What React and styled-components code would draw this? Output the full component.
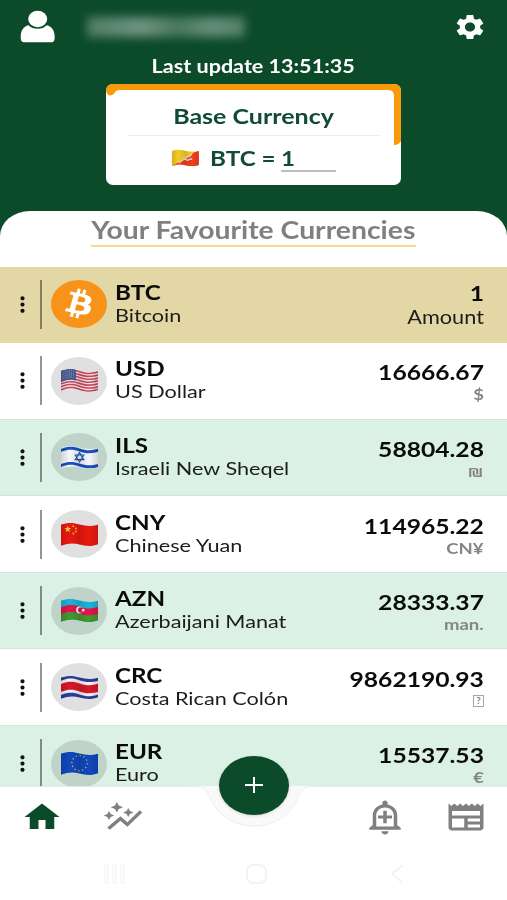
import React from 'react';
import styled, { createGlobalStyle } from 'styled-components';
import {
	MdAutoGraph,
	MdHome,
	MdMoreVert,
	MdNewspaper,
	MdOutlineAddAlert,
	MdSettings
} from 'react-icons/md';

const GlobalStyle = createGlobalStyle`
	* {
		box-sizing: border-box;
	}

	body {
		margin: 0;
		background: #fff;
		font-family: Lato, "Noto Sans", sans-serif;
	}
`;

const Screen = styled.div`
	display: flex;
	flex-direction: column;
	width: 507px;
	height: 900px;
	overflow: hidden;
	background: #0c4b29;
`;

/* wide text: every label is drawn a bit broader than the font */
const Text = styled.span`
	display: block;
	font-size: ${p => p.$size}px;
	font-weight: ${p => p.$weight || 700};
	line-height: ${p => p.$line || 24}px;
	color: ${p => p.$color || '#0b0b0b'};
	white-space: nowrap;
	transform: scaleX(${p => p.$stretch || 1.18});
	transform-origin: ${p => p.$origin || 'left'} center;
`;

const Header = styled.header`
	flex: none;
	display: flex;
	flex-direction: column;
	align-items: center;
	height: 211px;
`;

const TopBar = styled.div`
	display: flex;
	align-items: center;
	width: 100%;
	height: 53px;
	padding: 0 20px;
`;

const UserName = styled.div`
	width: 158px;
	height: 20px;
	margin: 0 auto 0 31px;
	background: linear-gradient(90deg, #ffffff48, #ffffff68 35%, #ffffff40 57%, #ffffff60 80%, #ffffff48);
	filter: blur(5px);
`;

const SettingsIcon = styled(MdSettings)`
	width: 34px;
	height: 30px;
	color: #fff;
`;

const BaseCard = styled.section`
	position: relative;
	display: flex;
	flex-direction: column;
	align-items: center;
	width: 295px;
	height: 101px;
	margin-top: 5px;
	padding-top: 19px;
	border-radius: 7px;
	background: #fff;
`;

const CardAccent = styled.svg`
	position: absolute;
	top: 0;
	left: 0;
`;

const Divider = styled.hr`
	width: 253px;
	height: 1px;
	margin: 7px 0 9px;
	border: 0;
	background: #ededed;
`;

const BaseRow = styled.div`
	display: flex;
	align-items: center;
	width: 165px;
	height: 26px;
`;

const BaseInput = styled.div`
	width: 56px;
	height: 27px;
	margin-left: 19px;
	border-bottom: 2px solid #bdbdbd;
`;

const BaseLabel = styled.div`
	width: 52px;
	margin-left: 10px;
`;

const Sheet = styled.main`
	flex: 1;
	display: flex;
	flex-direction: column;
	min-height: 0;
	border-radius: 30px 30px 0 0 / 25px 25px 0 0;
	background: #fff;
	overflow: hidden;
`;

const SheetTitle = styled.div`
	flex: none;
	display: flex;
	justify-content: center;
	align-self: center;
	width: 325px;
	height: 36px;
	margin-bottom: 19.6px;
	padding-top: 4px;
	border-bottom: 2px solid #f6dc85;
`;

const List = styled.div`
	flex: none;
	height: 519.4px;
	overflow: hidden;
`;

const Row = styled.div`
	display: flex;
	align-items: center;
	height: 76.55px;
	padding: 0 23px 0 10px;
	border-bottom: 1px solid ${p => (p.$tone === 'base' ? '#e3d7a5' : '#d6e2dc')};
	background: ${p => ({ base: '#e3d7a5', mint: '#dbf1e5', plain: '#fff' })[p.$tone]};
`;

const Rule = styled.div`
	width: 2px;
	height: 49px;
	margin: 0 9px 0 5px;
	background: #0000006b;
`;

const Badge = styled.div`
	display: flex;
	align-items: center;
	justify-content: center;
	width: 56px;
	height: 48px;
	border-radius: 50%;
	background: ${p => (p.$coin ? '#f7931a' : '#0000001f')};
`;

const Names = styled.div`
	flex: 1;
	margin-left: 8px;
	padding-bottom: 1px;
`;

const Amounts = styled.div`
	display: flex;
	flex-direction: column;
	align-items: flex-end;
	padding-top: ${p => (p.$base ? 2 : 3)}px;
`;

const MissingGlyph = styled.span`
	display: flex;
	align-items: center;
	justify-content: center;
	width: 11px;
	height: 12px;
	margin-top: 4px;
	margin-bottom: 4px;
	border: 1px solid #a5a5a5;
	font-size: 9px;
	font-weight: 700;
	color: #777;
`;

const BottomBar = styled.nav`
	flex: none;
	position: relative;
	display: flex;
	align-items: flex-start;
	height: 62px;
	padding: 12px 18px 0 19px;
	border-top: 1px solid #e4e9e6;
	background: #fff;
`;

const Tab = styled.span`
	display: flex;
	align-items: center;
	justify-content: center;
	width: 46px;
	height: 36px;
	margin-left: ${p => p.$left || 0}px;
	color: ${p => (p.$active ? '#0c4b29' : '#808080')};

	svg {
		flex: none;
		width: 42px;
		height: ${p => (p.$tall ? 38 : 36)}px;
	}
`;

const Notch = styled.svg`
	position: absolute;
	top: -1px;
	left: 190px;
`;

const AddButton = styled.button`
	position: absolute;
	top: -31px;
	left: 219px;
	display: flex;
	align-items: center;
	justify-content: center;
	width: 70px;
	height: 59px;
	padding: 0;
	border: 0;
	border-radius: 50%;
	background: #0c4b29;
	box-shadow: 0 1px 3px #00000026;
`;

const SystemBar = styled.div`
	flex: 1;
	display: flex;
	justify-content: space-between;
	align-items: flex-start;
	padding: 16px 103px 0 104px;
`;

const UserIcon = () => (
	<svg width="36" height="34" viewBox="0 0 36 34" fill="#fff">
		<ellipse cx="17.7" cy="9" rx="9.5" ry="8.2" />
		<path d="M8.500 15.200C10.500 17.500 14 18.800 17.700 18.800s6.700-1.300 9-3.600C32 16.500 34.700 20.500 34.700 27c0 4-1 5.300-4 5.300H5c-3 0-4.300-1.300-4.300-5.300C.7 20.500 3.400 16.500 8.500 15.200z" />
	</svg>
);

const BitcoinMark = () => (
	<svg width="56" height="48" viewBox="0 0 64 64" preserveAspectRatio="none" fill="#fff">
		<path d="M46.1 27.400c.6-4.300-2.600-6.500-7-8l1.400-5.700-3.500-.9-1.400 5.500c-.9-.2-1.800-.4-2.800-.7l1.400-5.500-3.500-.9-1.400 5.700c-.7-.2-1.500-.3-2.200-.5l-4.800-1.200-.9 3.700s2.600.6 2.500.6c1.400.4 1.700 1.300 1.600 2l-3.900 15.700c-.2.400-.6 1.100-1.600.8 0 .1-2.500-.6-2.500-.6l-1.700 4 4.500 1.100c.8.2 1.700.4 2.500.6l-1.400 5.700 3.500.9 1.400-5.700c1 .3 1.900.5 2.800.7l-1.400 5.700 3.500.9 1.400-5.700c6 1.100 10.500.7 12.400-4.700 1.500-4.400-.1-6.900-3.200-8.500 2.300-.5 4-2 4.500-5.100zm-8 11.200c-1.100 4.400-8.400 2-10.800 1.400l1.900-7.700c2.400.6 10 1.800 8.900 6.300zm1.100-11.300c-1 4-7.100 2-9.100 1.500l1.700-7c2 .5 8.400 1.400 7.400 5.500z" />
	</svg>
);

/* shared waving outline of every flag, 38 x 24 */
const WAVE = 'M1 2.500C8 .1 13 .6 19 2.300s12 2 18 .3V21.300c-6 2.400-12 2-18 .3S8 20.300 1 22.800z';

const stripe = (y, h) =>
	`M0 ${y + 0.7}C8 ${y - 2.7} 13 ${y - 2.200} 19 ${y - 0.200}s12 2.500 19 .1v${h}c-7 2.400-13 2.100-19 0S8 ${y + h - 2.700} 0 ${y + h + 0.7}z`;

const flags = {
	USD: (
		<>
			<rect width="38" height="24" fill="#f2e9ea" />
			{[3, 5.800, 8.600, 11.400, 14.200, 17, 19.800].map(y => (
				<path key={y} d={stripe(y, 1.400)} fill="#cf4457" />
			))}
			<path d="M1 2.500C7 .2 11 .2 15.500 1.400v10.600c-4.500-1.200-8.500-1-14.500 1.500z" fill="#4a5a94" />
			{[3.500, 5.500, 7.500, 9.500].map(y => (
				<path key={y} d={`M2.500 ${y + 0.500}q6-2.200 12-.8`} stroke="#c3c9dd" strokeWidth=".7" strokeDasharray=".8 1.300" fill="none" />
			))}
		</>
	),
	ILS: (
		<>
			<rect width="38" height="24" fill="#f6f7fb" />
			<path d={stripe(3.500, 2.800)} fill="#1850c4" />
			<path d={stripe(18, 2.800)} fill="#1850c4" />
			<g fill="none" stroke="#2858bd" strokeWidth="1.100">
				<path d="M19 7.300l4.200 6.700h-8.400z" />
				<path d="M19 16.300l4.200-6.700h-8.400z" />
			</g>
		</>
	),
	CNY: (
		<>
			<rect width="38" height="24" fill="#e9190f" />
			<path d="M7.500 3.500l.9 2.200 2.400.1-1.900 1.500.7 2.300-2.100-1.300-2 1.300.6-2.300-1.800-1.500 2.400-.1z" fill="#ffd43b" />
			<g fill="#ffc02e">
				<circle cx="13" cy="4" r=".9" />
				<circle cx="15.500" cy="6.200" r=".9" />
				<circle cx="15.500" cy="9" r=".9" />
				<circle cx="13" cy="11" r=".9" />
			</g>
		</>
	),
	AZN: (
		<>
			<rect width="38" height="24" fill="#19b4da" />
			<path d={stripe(8.500, 7)} fill="#e4154a" />
			<path d={stripe(15.500, 10)} fill="#45992d" />
			<circle cx="19" cy="11.500" r="3.300" fill="#fff" />
			<circle cx="20.200" cy="11.500" r="2.600" fill="#e4154a" />
			<circle cx="22.600" cy="11.700" r="1.300" fill="#fff" />
		</>
	),
	CRC: (
		<>
			<rect width="38" height="24" fill="#f4f4f6" />
			<path d={stripe(1.500, 3.700)} fill="#2b3e9c" />
			<path d={stripe(8.300, 7.600)} fill="#d9172a" />
			<path d={stripe(18.800, 6)} fill="#2b3e9c" />
		</>
	),
	EUR: (
		<>
			<rect width="38" height="24" fill="#1048bd" />
			<ellipse cx="19" cy="11.700" rx="7.500" ry="7.300" fill="none" stroke="#d8c94f" strokeWidth="1.200" strokeDasharray="1.200 2.660" />
		</>
	),
	BTN: (
		<>
			<rect width="38" height="24" fill="#f7cb25" />
			<path d="M0 24L38 0v24z" fill="#f1401f" />
			<path d="M10 17.500c4 1 3-3 7-3.500s3-4 6-4 3-3 5-3M16 11c4-1 3 5 6 4s4-3 6-1" fill="none" stroke="#f3dccb" strokeWidth="1.800" />
		</>
	)
};

const Flag = ({ code, width = 39, height = 25 }) => (
	<svg width={width} height={height} viewBox="0 0 38 24" preserveAspectRatio="none">
		<defs>
			<clipPath id={`wave-${code}`}>
				<path d={WAVE} />
			</clipPath>
			<linearGradient id={`shade-${code}`}>
				<stop offset="0" stopOpacity=".16" />
				<stop offset=".25" stopOpacity="0" />
				<stop offset=".5" stopOpacity=".12" />
				<stop offset=".75" stopOpacity="0" />
				<stop offset="1" stopOpacity=".16" />
			</linearGradient>
		</defs>
		<g clipPath={`url(#wave-${code})`}>
			{flags[code]}
			<rect width="38" height="24" fill={`url(#shade-${code})`} />
		</g>
	</svg>
);

const currencies = [
	{ code: 'BTC', name: 'Bitcoin', amount: '1', unit: 'Amount', tone: 'base' },
	{ code: 'USD', name: 'US Dollar', amount: '16666.67', unit: '$', tone: 'plain' },
	{ code: 'ILS', name: 'Israeli New Sheqel', amount: '58804.28', unit: '₪', tone: 'mint' },
	{ code: 'CNY', name: 'Chinese Yuan', amount: '114965.22', unit: 'CN¥', tone: 'plain' },
	{ code: 'AZN', name: 'Azerbaijani Manat', amount: '28333.37', unit: 'man.', tone: 'mint' },
	{ code: 'CRC', name: 'Costa Rican Colón', amount: '9862190.93', unit: null, tone: 'plain' },
	{ code: 'EUR', name: 'Euro', amount: '15537.53', unit: '€', tone: 'mint' }
];

const CurrencyRow = ({ code, name, amount, unit, tone }) => {
	const isBase = tone === 'base';

	return (
		<Row $tone={tone}>
			<MdMoreVert size={25} color="#111" />
			<Rule />
			<Badge $coin={isBase}>{isBase ? <BitcoinMark /> : <Flag code={code} />}</Badge>
			<Names>
				<Text $size={20.500} $line={23}>{code}</Text>
				<Text $size={18.200} $line={23} $weight={400} $color="#1c1c1c" $stretch={1.190}>{name}</Text>
			</Names>
			<Amounts $base={isBase}>
				<Text $size={20.700} $line={24} $stretch={1.190} $origin="right">{amount}</Text>
				{unit ? (
					<Text
						$size={isBase ? 18.400 : 15.700}
						$line={isBase ? 24 : 20}
						$weight={isBase ? 400 : 700}
						$color={isBase ? '#1c1c1c' : '#858585'}
						$origin="right"
					>
						{unit}
					</Text>
				) : (
					<MissingGlyph>?</MissingGlyph>
				)}
			</Amounts>
		</Row>
	);
};

export default function App() {
	return (
		<>
			<GlobalStyle />
			<Screen>
				<Header>
					<TopBar>
						<UserIcon />
						<UserName />
						<SettingsIcon preserveAspectRatio="none" />
					</TopBar>
					<Text $size={18.500} $line={26} $color="#fff" $origin="center" $stretch={1.165}>Last update 13:51:35</Text>
					<BaseCard>
						<CardAccent width="295" height="62" viewBox="0 0 295 62">
							<path d="M0 7Q0 0 7 0H288Q295 0 295 7V57Q293 61 288 61V12Q288 6 282 6H14Q9 6 8 10Q2 14 0 7Z" fill="#f99a0b" />
						</CardAccent>
						<Text $size={21} $line={25} $color="#124b35" $origin="center" $stretch={1.190}>Base Currency</Text>
						<Divider />
						<BaseRow>
							<Flag code="BTN" width={29} height={18} />
							<BaseLabel>
								<Text $size={20.500} $line={25} $color="#124b35">BTC =</Text>
							</BaseLabel>
							<BaseInput>
								<Text $size={20.500} $line={26} $color="#124b35">1</Text>
							</BaseInput>
						</BaseRow>
					</BaseCard>
				</Header>

				<Sheet>
					<SheetTitle>
						<Text $size={24} $line={29} $color="#808080" $origin="center">Your Favourite Currencies</Text>
					</SheetTitle>
					<List>
						{currencies.map(c => (
							<CurrencyRow key={c.code} {...c} />
						))}
					</List>
					<BottomBar>
						<Notch width="128" height="46" viewBox="0 0 128 46">
							<path d="M0 0H7C14 1 17 5 20 12C28 30 44 40 64 40S100 30 108 12C111 5 114 1 121 0H128" fill="#f9f9f9" stroke="#efefef" />
						</Notch>
						<AddButton>
							<svg width="18" height="16" viewBox="0 0 18 16">
								<path d="M0 8H18M9 0V16" stroke="#fff" strokeWidth="2" />
							</svg>
						</AddButton>
						<Tab $active><MdHome preserveAspectRatio="none" /></Tab>
						<Tab $left={35}><MdAutoGraph preserveAspectRatio="none" /></Tab>
						<Tab $left={217} $tall><MdOutlineAddAlert preserveAspectRatio="none" /></Tab>
						<Tab $left={35}><MdNewspaper preserveAspectRatio="none" /></Tab>
					</BottomBar>
					<SystemBar>
						<svg width="22" height="20" viewBox="0 0 22 20" fill="#fff" stroke="#f1f1f1">
							<path d="M1 1h3v18H1zM9 1h3v18H9zM17 1h3v18h-3z" />
						</svg>
						<svg width="24" height="20" viewBox="0 0 24 20" fill="none" stroke="#f3f3f3" strokeWidth="2">
							<rect x="1" y="1" width="19" height="18" rx="6" />
						</svg>
						<svg width="14" height="20" viewBox="0 0 14 20" fill="none" stroke="#f3f3f3" strokeWidth="2">
							<path d="M13 1L2 10l11 9" />
						</svg>
					</SystemBar>
				</Sheet>
			</Screen>
		</>
	);
}
